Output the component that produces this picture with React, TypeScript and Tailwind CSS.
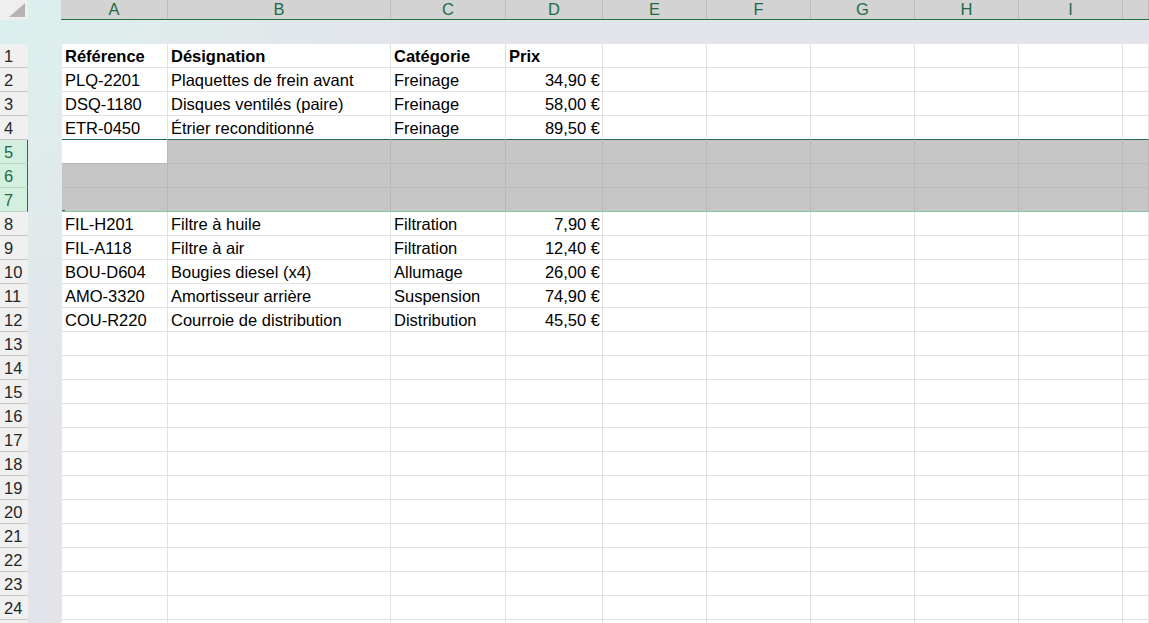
import React from "react";

const COLS = [
  { l: "A", w: "w-[106px]" },
  { l: "B", w: "w-[223px]" },
  { l: "C", w: "w-[115px]" },
  { l: "D", w: "w-[97px]" },
  { l: "E", w: "w-[104px]" },
  { l: "F", w: "w-[104px]" },
  { l: "G", w: "w-[104px]" },
  { l: "H", w: "w-[104px]" },
  { l: "I", w: "w-[104px]" },
  { l: "", w: "flex-1" },
];

const DATA: Record<number, string[]> = {
  1: ["Référence", "Désignation", "Catégorie", "Prix"],
  2: ["PLQ-2201", "Plaquettes de frein avant", "Freinage", "34,90 €"],
  3: ["DSQ-1180", "Disques ventilés (paire)", "Freinage", "58,00 €"],
  4: ["ETR-0450", "Étrier reconditionné", "Freinage", "89,50 €"],
  8: ["FIL-H201", "Filtre à huile", "Filtration", "7,90 €"],
  9: ["FIL-A118", "Filtre à air", "Filtration", "12,40 €"],
  10: ["BOU-D604", "Bougies diesel (x4)", "Allumage", "26,00 €"],
  11: ["AMO-3320", "Amortisseur arrière", "Suspension", "74,90 €"],
  12: ["COU-R220", "Courroie de distribution", "Distribution", "45,50 €"],
};

const font = { fontFamily: '"Liberation Sans", Arial, sans-serif' };

function GridRow({ n }: { n: number }) {
  const sel = n >= 5 && n <= 7;
  const data = DATA[n];
  const bottomCls =
    n === 4
      ? "border-b border-b-[#1e6b45]"
      : n === 7
      ? "border-b border-b-[#86c4a0]"
      : sel
      ? "border-b border-b-[#bababa]"
      : "border-b border-b-[#e1e1e1]";
  return (
    <div className="flex h-[24px] shrink-0">
      <div
        className={
          sel
            ? "w-[28px] shrink-0 h-full flex items-center pl-[4px] pt-[2px] text-[16.5px] bg-[#d3efdf] text-[#1e6b45] border-r border-r-[#217346] border-b border-b-[#b5d8c3]"
            : "w-[28px] shrink-0 h-full flex items-center pl-[4px] pt-[2px] text-[16.5px] bg-[#f0f0f0] text-[#262626] border-b border-b-[#c4c4c4]"
        }
      >
        {n}
      </div>
      <div className="w-[34px] shrink-0 h-full" />
      {COLS.map((c, i) => {
        const active = n === 5 && i === 0;
        const bg = sel && !active ? "bg-[#c6c6c6]" : "bg-white";
        const rb = sel ? "border-r border-r-[#b9b9b9]" : "border-r border-r-[#e1e1e1]";
        const txt = data ? data[i] : undefined;
        const right = i === 3 && n !== 1;
        return (
          <div
            key={i}
            className={`${c.w} shrink-0 h-full ${bg} ${rb} ${bottomCls} flex items-center pt-[2px] ${
              right ? "justify-end pr-[2px]" : "pl-[3px]"
            } text-[16.5px] text-black whitespace-nowrap overflow-hidden relative ${
              n === 1 ? "font-bold" : ""
            }`}
          >
            {txt}
            {n === 7 && i === 0 && (
              <div className="absolute left-0 bottom-[-2px] w-[3px] h-[3px] bg-[#217346]" />
            )}
          </div>
        );
      })}
    </div>
  );
}

export default function App() {
  const rows = Array.from({ length: 25 }, (_, i) => i + 1);
  return (
    <div
      className="w-[1149px] h-[623px] overflow-hidden flex flex-col bg-[radial-gradient(circle_at_0_0,#d9f1ee_0px,#e0ebec_160px,#e2e4e9_420px)]"
      style={font}
    >
      {/* column header */}
      <div className="flex h-[20px] shrink-0">
        <div className="w-[28px] h-full shrink-0 bg-[#efefef] relative">
          <svg width="28" height="20" className="absolute inset-0">
            <polygon points="25,3 25,17 9,17" fill="#b4b4b4" />
          </svg>
        </div>
        <div className="w-[33px] h-full shrink-0" />
        <div className="flex-1 flex h-full bg-[#d3d3d3] border-b border-b-[#217346]">
          {COLS.map((c, i) => (
            <div
              key={i}
              className={`${i === 0 ? "w-[107px]" : c.w} shrink-0 h-full border-r border-r-[#bcbcbc] flex items-center justify-center text-[16.5px] text-[#1e6b45]`}
            >
              {c.l}
            </div>
          ))}
        </div>
      </div>
      {/* band */}
      <div className="h-[24px] shrink-0" />
      {rows.map((n) => (
        <GridRow key={n} n={n} />
      ))}
    </div>
  );
}
